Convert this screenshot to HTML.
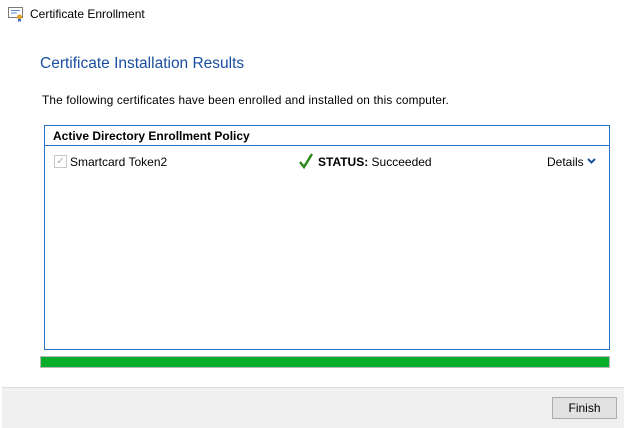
<!DOCTYPE html>
<html><head><style>
body{margin:0;width:624px;height:427px;background:#fff;font-family:"Liberation Sans",sans-serif;position:relative;overflow:hidden;font-size:12px;color:#000}
.a{position:absolute}
</style></head><body>
<svg class="a" style="left:8px;top:6px" width="16" height="16" viewBox="0 0 16 16">
<rect x="0.5" y="1.5" width="14" height="10" fill="#fff" stroke="#7a7a7a"/>
<line x1="3" y1="4.5" x2="12" y2="4.5" stroke="#5a8ad0"/><line x1="3" y1="7" x2="9" y2="7" stroke="#5a8ad0"/>
<circle cx="11.5" cy="11" r="2.5" fill="#e0a020"/><path d="M10 13l0 3 1.5-1 1.5 1 0-3" fill="#3a6fd0"/>
</svg>
<div class="a" style="left:30px;top:7px;font-size:12px">Certificate Enrollment</div>
<div class="a" style="left:40px;top:55px;font-size:15.5px;color:#1a4fa0">Certificate Installation Results</div>
<div class="a" style="left:42px;top:93px;font-size:11.8px;letter-spacing:0.15px">The following certificates have been enrolled and installed on this computer.</div>
<div class="a" style="left:44px;top:125px;width:564px;height:223px;border:1px solid #2a72c4"></div>
<div class="a" style="left:45px;top:145px;width:564px;height:1px;background:#2a72c4"></div>
<div class="a" style="left:53px;top:129px;font-weight:bold;font-size:12px">Active Directory Enrollment Policy</div>
<div class="a" style="left:54px;top:155px;width:11px;height:11px;border:1px solid #c8c8c8;color:#aaa;font-size:10px;line-height:11px;text-align:center">✓</div>
<div class="a" style="left:70px;top:155px;font-size:12px">Smartcard Token2</div>
<svg class="a" style="left:299px;top:153px" width="14" height="16" viewBox="0 0 14 16"><path d="M1 9l4 5 8-13" fill="none" stroke="#2e8a1e" stroke-width="2.5"/></svg>
<div class="a" style="left:318px;top:155px;font-size:12px"><b>STATUS:</b> Succeeded</div>
<div class="a" style="left:547px;top:155px;font-size:12px">Details</div>
<svg class="a" style="left:587px;top:158px" width="9" height="6" viewBox="0 0 9 6"><path d="M1 1l3.5 3.5L8 1" fill="none" stroke="#1a4fa0" stroke-width="2"/></svg>
<div class="a" style="left:40px;top:356px;width:568px;height:10px;background:#06ae29;border:1px solid #b8b8b8"></div>
<div class="a" style="left:2px;top:387px;width:622px;height:40px;background:#f0f0f0;border-top:1px solid #dcdcdc"></div>
<div class="a" style="left:552px;top:397px;width:63px;height:20px;background:#e1e1e1;border:1px solid #adadad;text-align:center;line-height:21px;font-size:12px">Finish</div>
</body></html>
